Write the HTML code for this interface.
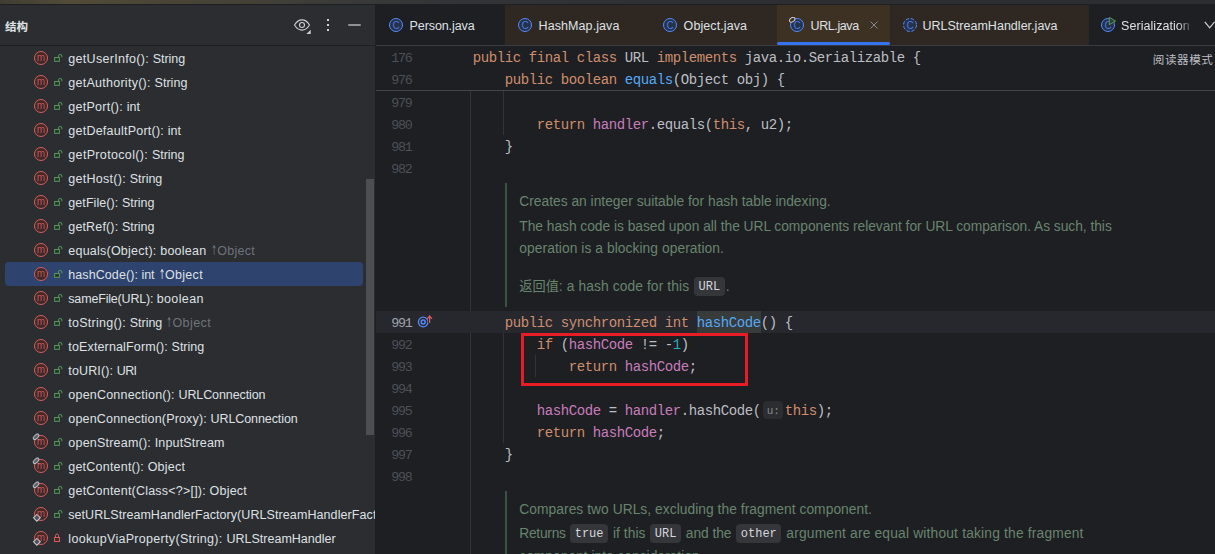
<!DOCTYPE html>
<html lang="zh"><head><meta charset="utf-8"><title>URL.java</title>
<style>
html,body{margin:0;padding:0;background:#1e1f22;overflow:hidden}
body{width:1215px;height:554px;position:relative;font-family:"Liberation Sans","Noto Sans CJK SC",sans-serif;font-size:12px;color:#dfe1e5}
#top{position:absolute;left:0;top:0;width:1215px;height:4px;background:linear-gradient(90deg,#3f3d33 0,#524b37 70px,#4a4536 160px,#434137 260px,#3b3b39 330px,#333437 450px,#2e2f32 700px,#2b2d30 1215px);border-bottom:1px solid #1e1f22}
#left{position:absolute;left:0;top:5px;width:375px;height:549px;background:#2b2d30;overflow:hidden}
#left .hdr{position:absolute;left:0;top:0;width:375px;height:40px;border-bottom:1px solid #1e1f22}
#left .ttl{position:absolute;left:5px;top:13.5px;font-size:11.5px;font-weight:bold;color:#dfe1e5;line-height:16px}
.eye{position:absolute;left:293px;top:13px}
.dots{position:absolute;left:327px;top:14px;width:2px}
.dots i{display:block;width:2px;height:2px;background:#ced0d6;margin-bottom:3px}
.minus{position:absolute;left:347.7px;top:18.9px;width:13px;height:2px;background:#8e9198;border-radius:1px}
.row{position:absolute;left:5px;width:358px;height:24px;line-height:24px;white-space:nowrap;border-radius:4px}
.row.sel{background:#2e436e}
.row .mi{position:absolute;left:27px;top:3px}
.row .lk{position:absolute;left:48px;top:7px}
.row .t{position:absolute;left:63.3px;top:1px;white-space:pre;color:#dfe1e5;font-size:12.5px}
.row .g{position:absolute;top:1px;color:#6f737a;font-size:12.5px}
.row.sel .g{color:#dfe1e5}
.ar{display:inline-block;width:4.7px;font-family:"DejaVu Sans",sans-serif;font-size:13.5px;line-height:12px;transform:scaleX(.55);transform-origin:0 50%;position:relative;top:-0.5px;left:-1.4px}
.ml{font-family:"Liberation Sans",sans-serif;font-size:10px;fill:#db5c5c;fill-opacity:.85;text-anchor:middle}
.sb{position:absolute;left:366px;top:174px;width:8px;height:256px;background:#4d4e52}
#ed{position:absolute;left:376px;top:5px;width:839px;height:549px;background:#1e1f22;overflow:hidden}
.tabs{position:absolute;left:0;top:0;width:839px;height:40px;border-bottom:1px solid #393b40}
.tab{position:absolute;top:0;height:40px}
.tab.br{background:#2f2822}
.tab.cur{background:#3d3124}
.tab .ci{position:absolute;left:12px;top:12px}
.tab .tn{position:absolute;left:33.6px;top:13px;line-height:16px;font-size:12.5px;color:#dfe1e5;white-space:nowrap}
.tab .cx{position:absolute;left:92px;top:15px}
.tab .ul{position:absolute;left:0;right:0;bottom:0;height:3px;background:#3574f0;border-radius:2px}
.tn.fade{overflow:hidden;-webkit-mask-image:linear-gradient(90deg,#000 82%,rgba(0,0,0,.25) 100%);mask-image:linear-gradient(90deg,#000 82%,rgba(0,0,0,.25) 100%)}
.chev{position:absolute;left:828px;top:16px}
.cl{font-family:"Liberation Sans",sans-serif;font-size:10px;fill:#548af7;fill-opacity:.85;text-anchor:middle}
.sticky{position:absolute;left:0;top:41px;width:839px;height:44px;border-bottom:1px solid #43454a}
.gsep{position:absolute;left:94px;top:86px;width:1px;height:470px;background:#313438}
.curline{position:absolute;left:0;top:306px;width:839px;height:21.5px;background:#26282e}
.idhl{position:absolute;left:321px;top:306px;width:64px;height:21.5px;background:#373b39}
.ig{position:absolute;width:1px;background:#313438}
.ln{position:absolute;left:0;width:35.4px;margin-top:2px;text-align:right;height:22px;line-height:22px;font-family:"Liberation Mono",monospace;font-size:13.33px;letter-spacing:-1.3px;color:#4b5059}
.ln.on{color:#a1a3ab}
pre.cd{position:absolute;left:96.8px;margin:1px 0 0 0;height:22px;line-height:22px;font-family:"Liberation Mono",monospace;font-size:14px;letter-spacing:-0.4014px;color:#bcbec4;white-space:pre}
pre.cd b{font-weight:normal;color:#cf8e6d}
pre.cd u{text-decoration:none;color:#56a8f5}
pre.cd em{font-style:normal;color:#c77dbb}
pre.cd s{text-decoration:none;color:#2aacb8}
.hint{display:inline-block;width:19px;height:18px;line-height:20px;vertical-align:top;margin:1px 2px 0 2px;padding:0 0 0 1px;text-align:center;letter-spacing:0;font-size:11px;color:#868a91;background:#2b2d30;border-radius:4px}
.redbox{position:absolute;left:145px;top:328px;width:221px;height:47px;border:3px solid #e81c24;box-sizing:content-box}
.reader{position:absolute;left:776.8px;top:46.8px;letter-spacing:0.55px;font-size:11.6px;line-height:16px;color:#bcbec4;white-space:nowrap}
.gi{position:absolute;left:40px;top:308px}
.dbar{position:absolute;left:129px;width:2px;background:#3b5241}
.doc{position:absolute;left:143.3px;margin-top:1px;height:22px;line-height:22px;font-size:13.8px;color:#68846f;white-space:nowrap}
.doc code{font-family:"Liberation Mono",monospace;font-size:12px;letter-spacing:0;color:#d5d7dc;background:#35363a;border-radius:4px;padding:2.5px 4.5px 3px 4.5px;margin:0 1px;position:relative;top:-2px}
.doc .zh{font-size:13.2px}

</style></head>
<body>
<svg width="0" height="0" style="position:absolute"><defs>
<g id="m"><circle cx="9" cy="9" r="6.5" fill="#402929" stroke="#db5c5c" stroke-width="1"/></g>
<g id="fin"><path d="M5.8 5.6 L7.4 7.2" stroke="#ced0d6" stroke-width="1" fill="none"/><ellipse cx="4.1" cy="3.8" rx="3.6" ry="1.9" transform="rotate(-45 4.1 3.8)" fill="#63666d" stroke="#ced0d6" stroke-width="0.9"/></g>
<g id="sta"><rect x="2.5" y="10.4" width="4.8" height="4.8" transform="rotate(45 4.9 12.8)" fill="#4e5157" stroke="#ced0d6" stroke-width="1"/></g>
<g id="lo"><rect x="1.6" y="4.5" width="4.8" height="3.8" fill="#253627" stroke="#57965c" stroke-width="1"/><path d="M5.6 4.5 V3 A1.65 1.65 0 0 1 8.9 3 V4.4" fill="none" stroke="#57965c" stroke-width="1"/></g>
<g id="lc"><rect x="1.5" y="4.5" width="5" height="4" fill="#402929" stroke="#db5c5c" stroke-width="1"/><path d="M2.5 4.5 V2.5 A1.5 1.5 0 0 1 5.5 2.5 V4.5" fill="none" stroke="#db5c5c" stroke-width="1"/></g>
</defs></svg>
<svg width="0" height="0" style="position:absolute"><defs>
<g id="cls"><circle cx="8" cy="8" r="6.5" fill="#25324d" stroke="#548af7" stroke-width="1"/></g>
<g id="abs"><circle cx="8" cy="8" r="6.5" fill="#25324d" stroke="#548af7" stroke-width="1" stroke-dasharray="3.4 1.7"/></g>
<g id="fin2"><ellipse cx="3.2" cy="2.8" rx="3" ry="2" transform="rotate(-35 3.2 2.8)" fill="#3d3124" stroke="#ced0d6" stroke-width="1"/></g>
<g id="run"><path d="M9.3 0.3 L15.6 4 L9.3 7.7Z" fill="#2b4232" stroke="#57965c" stroke-width="1" stroke-linejoin="round"/></g>
</defs></svg>
<div id="top"></div>
<div id="left">
<div class="hdr"><span class="ttl">结构</span>
<svg class="ic eye" width="20" height="16" viewBox="0 0 20 16"><path d="M1.5 7 C3.6 3.6,6 1.9,9 1.9 S14.4 3.6,16.5 7 C14.4 10.4,12 12.1,9 12.1 S3.6 10.4,1.5 7Z" fill="none" stroke="#ced0d6" stroke-width="1.1"/><circle cx="9" cy="7" r="2.5" fill="none" stroke="#ced0d6" stroke-width="1.1"/><path d="M17.7 11.7 V16 H13.4Z" fill="#ced0d6"/></svg>
<span class="dots"><i></i><i></i><i></i></span><span class="minus"></span></div>
<div class="row" style="top:41px"><svg class="mi" width="18" height="18" viewBox="0 0 18 18"><use href="#m"/><text x="9" y="12.2" class="ml">m</text></svg><svg class="lk" width="10" height="10" viewBox="0 0 10 10"><use href="#lo"/></svg><span class="t" style="letter-spacing:0.301px">getUserInfo(): </span><span class="t" style="left:147.7px;letter-spacing:-0.043px">String</span></div>
<div class="row" style="top:65px"><svg class="mi" width="18" height="18" viewBox="0 0 18 18"><use href="#m"/><text x="9" y="12.2" class="ml">m</text></svg><svg class="lk" width="10" height="10" viewBox="0 0 10 10"><use href="#lo"/></svg><span class="t" style="letter-spacing:0.263px">getAuthority(): </span><span class="t" style="left:149.5px;letter-spacing:0.041px">String</span></div>
<div class="row" style="top:89px"><svg class="mi" width="18" height="18" viewBox="0 0 18 18"><use href="#m"/><text x="9" y="12.2" class="ml">m</text></svg><svg class="lk" width="10" height="10" viewBox="0 0 10 10"><use href="#lo"/></svg><span class="t" style="letter-spacing:0.257px">getPort(): </span><span class="t" style="left:121.7px;letter-spacing:0.066px">int</span></div>
<div class="row" style="top:113px"><svg class="mi" width="18" height="18" viewBox="0 0 18 18"><use href="#m"/><text x="9" y="12.2" class="ml">m</text></svg><svg class="lk" width="10" height="10" viewBox="0 0 10 10"><use href="#lo"/></svg><span class="t" style="letter-spacing:0.240px">getDefaultPort(): </span><span class="t" style="left:162.8px;letter-spacing:-0.001px">int</span></div>
<div class="row" style="top:137px"><svg class="mi" width="18" height="18" viewBox="0 0 18 18"><use href="#m"/><text x="9" y="12.2" class="ml">m</text></svg><svg class="lk" width="10" height="10" viewBox="0 0 10 10"><use href="#lo"/></svg><span class="t" style="letter-spacing:0.339px">getProtocol(): </span><span class="t" style="left:146.9px;letter-spacing:-0.026px">String</span></div>
<div class="row" style="top:161px"><svg class="mi" width="18" height="18" viewBox="0 0 18 18"><use href="#m"/><text x="9" y="12.2" class="ml">m</text></svg><svg class="lk" width="10" height="10" viewBox="0 0 10 10"><use href="#lo"/></svg><span class="t" style="letter-spacing:0.276px">getHost(): </span><span class="t" style="left:124.7px;letter-spacing:-0.009px">String</span></div>
<div class="row" style="top:185px"><svg class="mi" width="18" height="18" viewBox="0 0 18 18"><use href="#m"/><text x="9" y="12.2" class="ml">m</text></svg><svg class="lk" width="10" height="10" viewBox="0 0 10 10"><use href="#lo"/></svg><span class="t" style="letter-spacing:0.073px">getFile(): </span><span class="t" style="left:116.9px;letter-spacing:-0.009px">String</span></div>
<div class="row" style="top:209px"><svg class="mi" width="18" height="18" viewBox="0 0 18 18"><use href="#m"/><text x="9" y="12.2" class="ml">m</text></svg><svg class="lk" width="10" height="10" viewBox="0 0 10 10"><use href="#lo"/></svg><span class="t" style="letter-spacing:0.149px">getRef(): </span><span class="t" style="left:116.9px;letter-spacing:-0.009px">String</span></div>
<div class="row" style="top:233px"><svg class="mi" width="18" height="18" viewBox="0 0 18 18"><use href="#m"/><text x="9" y="12.2" class="ml">m</text></svg><svg class="lk" width="10" height="10" viewBox="0 0 10 10"><use href="#lo"/></svg><span class="t" style="letter-spacing:0.229px">equals(Object): </span><span class="t" style="left:155.2px;letter-spacing:0.243px">boolean</span><span class="g" style="left:207.5px"><span class="ar">↑</span><span class="go" style="letter-spacing:0.278px">Object</span></span></div>
<div class="row sel" style="top:257px"><svg class="mi" width="18" height="18" viewBox="0 0 18 18"><use href="#m"/><text x="9" y="12.2" class="ml">m</text></svg><svg class="lk" width="10" height="10" viewBox="0 0 10 10"><use href="#lo"/></svg><span class="t" style="letter-spacing:0.078px">hashCode(): </span><span class="t" style="left:136.5px;letter-spacing:-0.068px">int</span><span class="g" style="left:155.2px"><span class="ar">↑</span><span class="go" style="letter-spacing:0.328px">Object</span></span></div>
<div class="row" style="top:281px"><svg class="mi" width="18" height="18" viewBox="0 0 18 18"><use href="#m"/><text x="9" y="12.2" class="ml">m</text></svg><svg class="lk" width="10" height="10" viewBox="0 0 10 10"><use href="#lo"/></svg><span class="t" style="letter-spacing:-0.173px">sameFile(URL): </span><span class="t" style="left:151.7px;letter-spacing:0.371px">boolean</span></div>
<div class="row" style="top:305px"><svg class="mi" width="18" height="18" viewBox="0 0 18 18"><use href="#m"/><text x="9" y="12.2" class="ml">m</text></svg><svg class="lk" width="10" height="10" viewBox="0 0 10 10"><use href="#lo"/></svg><span class="t" style="letter-spacing:0.253px">toString(): </span><span class="t" style="left:124.7px;letter-spacing:-0.009px">String</span><span class="g" style="left:162.8px"><span class="ar">↑</span><span class="go" style="letter-spacing:0.412px">Object</span></span></div>
<div class="row" style="top:329px"><svg class="mi" width="18" height="18" viewBox="0 0 18 18"><use href="#m"/><text x="9" y="12.2" class="ml">m</text></svg><svg class="lk" width="10" height="10" viewBox="0 0 10 10"><use href="#lo"/></svg><span class="t" style="letter-spacing:0.143px">toExternalForm(): </span><span class="t" style="left:166.6px;letter-spacing:-0.026px">String</span></div>
<div class="row" style="top:353px"><svg class="mi" width="18" height="18" viewBox="0 0 18 18"><use href="#m"/><text x="9" y="12.2" class="ml">m</text></svg><svg class="lk" width="10" height="10" viewBox="0 0 10 10"><use href="#lo"/></svg><span class="t" style="letter-spacing:0.141px">toURI(): </span><span class="t" style="left:111.8px;letter-spacing:-0.677px">URI</span></div>
<div class="row" style="top:377px"><svg class="mi" width="18" height="18" viewBox="0 0 18 18"><use href="#m"/><text x="9" y="12.2" class="ml">m</text></svg><svg class="lk" width="10" height="10" viewBox="0 0 10 10"><use href="#lo"/></svg><span class="t" style="letter-spacing:0.215px">openConnection(): </span><span class="t" style="left:173.5px;letter-spacing:-0.104px">URLConnection</span></div>
<div class="row" style="top:401px"><svg class="mi" width="18" height="18" viewBox="0 0 18 18"><use href="#m"/><text x="9" y="12.2" class="ml">m</text></svg><svg class="lk" width="10" height="10" viewBox="0 0 10 10"><use href="#lo"/></svg><span class="t" style="letter-spacing:0.175px">openConnection(Proxy): </span><span class="t" style="left:205.6px;letter-spacing:-0.096px">URLConnection</span></div>
<div class="row" style="top:425px"><svg class="mi" width="18" height="18" viewBox="0 0 18 18"><use href="#m"/><use href="#fin"/><text x="9" y="12.2" class="ml">m</text></svg><svg class="lk" width="10" height="10" viewBox="0 0 10 10"><use href="#lo"/></svg><span class="t" style="letter-spacing:0.216px">openStream(): </span><span class="t" style="left:149.7px;letter-spacing:0.164px">InputStream</span></div>
<div class="row" style="top:449px"><svg class="mi" width="18" height="18" viewBox="0 0 18 18"><use href="#m"/><use href="#fin"/><text x="9" y="12.2" class="ml">m</text></svg><svg class="lk" width="10" height="10" viewBox="0 0 10 10"><use href="#lo"/></svg><span class="t" style="letter-spacing:0.212px">getContent(): </span><span class="t" style="left:142.7px;letter-spacing:0.210px">Object</span></div>
<div class="row" style="top:473px"><svg class="mi" width="18" height="18" viewBox="0 0 18 18"><use href="#m"/><use href="#fin"/><text x="9" y="12.2" class="ml">m</text></svg><svg class="lk" width="10" height="10" viewBox="0 0 10 10"><use href="#lo"/></svg><span class="t" style="letter-spacing:0.213px">getContent(Class&lt;?&gt;[]): </span><span class="t" style="left:204.6px;letter-spacing:0.210px">Object</span></div>
<div class="row" style="top:497px"><svg class="mi" width="18" height="18" viewBox="0 0 18 18"><use href="#m"/><use href="#sta"/><text x="9" y="12.2" class="ml">m</text></svg><svg class="lk" width="10" height="10" viewBox="0 0 10 10"><use href="#lo"/></svg><span class="t" style="letter-spacing:0.049px">setURLStreamHandlerFactory</span><span class="t" style="left:232.0px;letter-spacing:0.093px">(URLStreamHandlerFact</span></div>
<div class="row" style="top:521px"><svg class="mi" width="18" height="18" viewBox="0 0 18 18"><use href="#m"/><use href="#sta"/><text x="9" y="12.2" class="ml">m</text></svg><svg class="lk" width="10" height="10" viewBox="0 0 10 10"><use href="#lc"/></svg><span class="t" style="letter-spacing:0.306px">lookupViaProperty(String): </span><span class="t" style="left:221.4px;letter-spacing:0.014px">URLStreamHandler</span></div>
<div class="sb"></div>
</div>
<div id="ed">
<div class="tabs">
<div class="tab" style="left:0;width:129px"><svg class="ci" width="16" height="16" viewBox="0 0 16 16"><use href="#cls"/><text x="8" y="11.5" class="cl">C</text></svg><span class="tn" style="letter-spacing:-0.1px">Person.java</span></div>
<div class="tab br" style="left:129px;width:145px"><svg class="ci" width="16" height="16" viewBox="0 0 16 16"><use href="#cls"/><text x="8" y="11.5" class="cl">C</text></svg><span class="tn" style="letter-spacing:0.08px">HashMap.java</span></div>
<div class="tab br" style="left:274px;width:127px"><svg class="ci" width="16" height="16" viewBox="0 0 16 16"><use href="#cls"/><text x="8" y="11.5" class="cl">C</text></svg><span class="tn" style="letter-spacing:0.09px">Object.java</span></div>
<div class="tab cur" style="left:401px;width:113px"><svg class="ci" width="16" height="16" viewBox="0 0 16 16"><use href="#cls"/><text x="8" y="11.5" class="cl">C</text><use href="#fin2"/></svg><span class="tn" style="letter-spacing:-0.41px">URL.java</span><svg class="cx" width="10" height="10" viewBox="0 0 10 10"><path d="M1.5 1.5 L8.5 8.5 M8.5 1.5 L1.5 8.5" stroke="#868a91" stroke-width="1" fill="none"/></svg><i class="ul"></i></div>
<div class="tab br" style="left:514px;width:199px"><svg class="ci" width="16" height="16" viewBox="0 0 16 16"><use href="#abs"/><text x="8" y="11.5" class="cl">C</text></svg><span class="tn" style="left:32.4px;letter-spacing:0.02px">URLStreamHandler.java</span></div>
<div class="tab" style="left:713px;width:126px"><svg class="ci" style="left:11px" width="16" height="16" viewBox="0 0 16 16"><use href="#cls"/><text x="8" y="11.5" class="cl">C</text><use href="#run"/></svg><span class="tn fade" style="left:32px;letter-spacing:0.06px">Serialization</span></div>
<svg class="chev" width="12" height="9" viewBox="0 0 12 9"><path d="M0.8 0.8 L5.7 6.9 L10.6 0.8" fill="none" stroke="#ced0d6" stroke-width="1.2"/></svg>
</div>
<div class="sticky"></div>
<div class="gsep"></div>
<div class="curline"></div>
<div class="idhl"></div>
<i class="ig" style="left:127px;top:86px;height:44px"></i>
<i class="ig" style="left:127px;top:328px;height:110px"></i>
<i class="ig" style="left:159px;top:350px;height:22px"></i>

<div class="ln" style="top:41px">176</div>
<div class="ln" style="top:63px">976</div>
<div class="ln" style="top:86px">979</div>
<div class="ln" style="top:108px">980</div>
<div class="ln" style="top:130px">981</div>
<div class="ln" style="top:152px">982</div>
<div class="ln on" style="top:306px">991</div>
<div class="ln" style="top:328px">992</div>
<div class="ln" style="top:350px">993</div>
<div class="ln" style="top:372px">994</div>
<div class="ln" style="top:394px">995</div>
<div class="ln" style="top:416px">996</div>
<div class="ln" style="top:438px">997</div>
<div class="ln" style="top:460px">998</div>

<pre class="cd" style="top:41px"><b>public final class</b> URL <b>implements</b> java.io.Serializable {</pre>
<pre class="cd" style="top:63px">    <b>public boolean</b> <u>equals</u>(Object obj) {</pre>
<pre class="cd" style="top:108px">        <b>return</b> <em>handler</em>.equals(<b>this</b>, u2);</pre>
<pre class="cd" style="top:130px">    }</pre>
<pre class="cd" style="top:306px">    <b>public synchronized int</b> <u>hashCode</u>() {</pre>
<pre class="cd" style="top:328px">        <b>if</b> (<em>hashCode</em> != -<s>1</s>)</pre>
<pre class="cd" style="top:350px">            <b>return</b> <em>hashCode</em>;</pre>
<pre class="cd" style="top:394px">        <em>hashCode</em> = <em>handler</em>.hashCode(<span class="hint">u:</span><b>this</b>);</pre>
<pre class="cd" style="top:416px">        <b>return</b> <em>hashCode</em>;</pre>
<pre class="cd" style="top:438px">    }</pre>

<div class="redbox"></div>
<div class="reader">阅读器模式</div>

<svg class="gi" width="18" height="16" viewBox="0 0 18 16"><circle cx="7.2" cy="9" r="4.8" fill="none" stroke="#548af7" stroke-width="1.3"/><circle cx="7.2" cy="9" r="2" fill="none" stroke="#548af7" stroke-width="1.5"/><path d="M13.6 10 V3.2" fill="none" stroke="#26282e" stroke-width="3"/><path d="M13.6 10 V3.2 M11.2 5.8 L13.6 3 L16 5.8" fill="none" stroke="#db5c5c" stroke-width="1.2"/></svg>

<i class="dbar" style="top:178px;height:124px"></i>
<div class="doc" style="top:185px">Creates an integer suitable for hash table indexing.</div>
<div class="doc" style="top:210px;letter-spacing:-0.034px">The hash code is based upon all the URL components relevant for URL comparison. As such, this</div>
<div class="doc" style="top:232px;letter-spacing:0.065px">operation is a blocking operation.</div>
<div class="doc" style="top:270px"><span class="zh">返回值</span><span style="letter-spacing:0.1px">: a hash code for this </span><code>URL</code>.</div>

<i class="dbar" style="top:486px;height:70px"></i>
<div class="doc" style="top:493px;letter-spacing:0.043px">Compares two URLs, excluding the fragment component.</div>
<div class="doc" style="top:517px"><span style="letter-spacing:-0.28px">Returns </span><code>true</code><span style="letter-spacing:0.05px"> if this </span><code>URL</code><span style="letter-spacing:-0.04px"> and the </span><code>other</code><span style="letter-spacing:0.177px"> argument are equal without taking the fragment</span></div>
<div class="doc" style="top:540px">component into consideration.</div>
</div>
</body></html>
